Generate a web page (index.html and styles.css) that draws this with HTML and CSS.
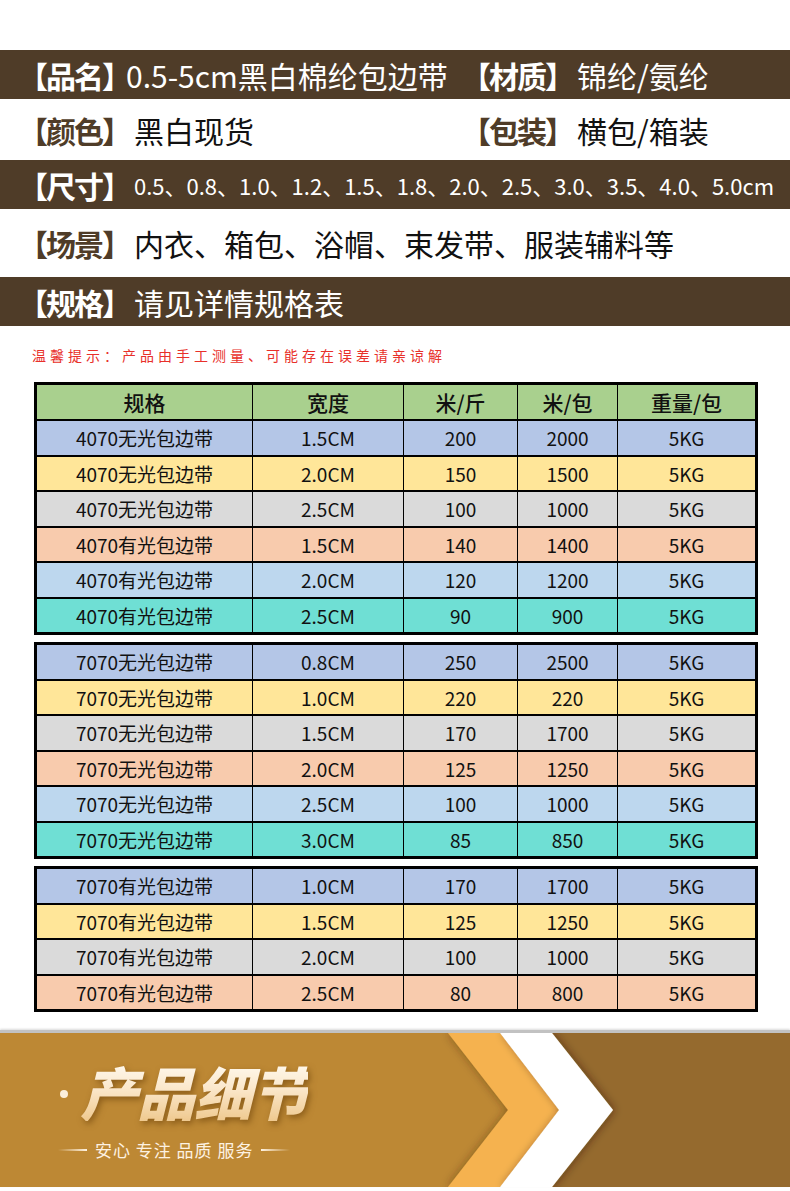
FILE: index.html
```html
<!DOCTYPE html>
<html lang="zh-CN">
<head>
<meta charset="utf-8">
<title>包边带规格</title>
<link rel="stylesheet" href="styles.css">
</head>
<body>
<div class="page">
  <div class="top-space"></div>

  <div class="bar dark">
    <div class="col1"><span class="label tight">【品名】</span>0.5-5cm黑白棉纶包边带</div>
    <div class="col2"><span class="label">【材质】</span>锦纶/氨纶</div>
  </div>
  <div class="bar light h61">
    <div class="col1"><span class="label">【颜色】</span>黑白现货</div>
    <div class="col2"><span class="label">【包装】</span>横包/箱装</div>
  </div>
  <div class="bar dark">
    <span class="label">【尺寸】</span><span class="sizes">0.5、0.8、1.0、1.2、1.5、1.8、2.0、2.5、3.0、3.5、4.0、5.0cm</span>
  </div>
  <div class="bar light h68">
    <span class="label">【场景】</span>内衣、箱包、浴帽、束发带、服装辅料等
  </div>
  <div class="bar dark">
    <span class="label">【规格】</span>请见详情规格表
  </div>

  <p class="notice">温馨提示：产品由手工测量、可能存在误差请亲谅解</p>

  <div class="tables">
    <div class="spec">
      <div class="row hd"><span>规格</span><span>宽度</span><span>米/斤</span><span>米/包</span><span>重量/包</span></div>
      <div class="row c-blue"><span>4070无光包边带</span><span>1.5CM</span><span>200</span><span>2000</span><span>5KG</span></div>
      <div class="row c-yellow"><span>4070无光包边带</span><span>2.0CM</span><span>150</span><span>1500</span><span>5KG</span></div>
      <div class="row c-gray"><span>4070无光包边带</span><span>2.5CM</span><span>100</span><span>1000</span><span>5KG</span></div>
      <div class="row c-peach"><span>4070有光包边带</span><span>1.5CM</span><span>140</span><span>1400</span><span>5KG</span></div>
      <div class="row c-sky"><span>4070有光包边带</span><span>2.0CM</span><span>120</span><span>1200</span><span>5KG</span></div>
      <div class="row c-teal"><span>4070有光包边带</span><span>2.5CM</span><span>90</span><span>900</span><span>5KG</span></div>
    </div>

    <div class="spec">
      <div class="row c-blue"><span>7070无光包边带</span><span>0.8CM</span><span>250</span><span>2500</span><span>5KG</span></div>
      <div class="row c-yellow"><span>7070无光包边带</span><span>1.0CM</span><span>220</span><span>220</span><span>5KG</span></div>
      <div class="row c-gray"><span>7070无光包边带</span><span>1.5CM</span><span>170</span><span>1700</span><span>5KG</span></div>
      <div class="row c-peach"><span>7070无光包边带</span><span>2.0CM</span><span>125</span><span>1250</span><span>5KG</span></div>
      <div class="row c-sky"><span>7070无光包边带</span><span>2.5CM</span><span>100</span><span>1000</span><span>5KG</span></div>
      <div class="row c-teal"><span>7070无光包边带</span><span>3.0CM</span><span>85</span><span>850</span><span>5KG</span></div>
    </div>

    <div class="spec">
      <div class="row c-blue"><span>7070有光包边带</span><span>1.0CM</span><span>170</span><span>1700</span><span>5KG</span></div>
      <div class="row c-yellow"><span>7070有光包边带</span><span>1.5CM</span><span>125</span><span>1250</span><span>5KG</span></div>
      <div class="row c-gray"><span>7070有光包边带</span><span>2.0CM</span><span>100</span><span>1000</span><span>5KG</span></div>
      <div class="row c-peach"><span>7070有光包边带</span><span>2.5CM</span><span>80</span><span>800</span><span>5KG</span></div>
    </div>
  </div>

  <div class="banner">
    <svg class="banner-bg" width="790" height="154" viewBox="0 0 790 154" preserveAspectRatio="none" aria-hidden="true">
      <defs>
        <filter id="sh" x="-30%" y="-10%" width="160%" height="120%">
          <feDropShadow dx="0" dy="0" stdDeviation="5" flood-color="#3a2406" flood-opacity="0.45"/>
        </filter>
        <filter id="sh2" x="-30%" y="-10%" width="160%" height="120%">
          <feDropShadow dx="2" dy="0" stdDeviation="4" flood-color="#2a1a04" flood-opacity="0.45"/>
        </filter>
      </defs>
      <rect x="0" y="0" width="790" height="154" fill="#bd8834"/>
      <polygon points="552,0 790,0 790,154 552,154 613,77" fill="#956a2e"/>
      <polygon points="448,0 500,0 559,77 500,154 448,154 508,77" fill="#f5b24f" filter="url(#sh)"/>
      <polygon points="500,0 552,0 613,77 552,154 500,154 559,77" fill="#ffffff" filter="url(#sh2)"/>
    </svg>
    <div class="banner-content">
      <div class="title"><span class="dot"></span><span class="title-text">产品细节</span></div>
      <div class="subtitle"><span class="line left"></span><span class="sub-text">安心 专注 品质 服务</span><span class="line right"></span></div>
    </div>
  </div>
</div>
</body>
</html>
```

FILE: styles.css
```css
html, body {
  margin: 0;
  padding: 0;
  background: #ffffff;
}

body {
  font-family: "Noto Sans CJK SC", "Noto Sans", sans-serif;
  color: #111;
}

.page {
  width: 790px;
  height: 1191px;
  overflow: hidden;
}

.top-space {
  height: 50px;
}

/* info bars */
.bar {
  display: flex;
  align-items: center;
  padding-left: 18px;
  font-size: 30px;
  line-height: 1;
  white-space: nowrap;
}

.bar.dark {
  height: 49px;
  background: #4f3c28;
  color: #ffffff;
}

.bar.light {
  color: #111111;
}

.bar.light .label {
  color: #4f3c28;
}

.bar.h61 { height: 61px; }
.bar.h68 { height: 68px; }

.label {
  font-weight: 700;
  letter-spacing: -2px;
  margin-right: 4px;
}

.label.tight {
  margin-right: -4px;
}

.col1 {
  width: 443px;
}

.sizes {
  font-size: 22px;
}

/* notice */
.notice {
  margin: 19px 0 0 32px;
  font-size: 14px;
  line-height: 20px;
  letter-spacing: 4px;
  color: #e8302a;
}

/* tables */
.tables {
  margin-top: 17px;
  display: flex;
  flex-direction: column;
  gap: 7px;
  padding-left: 34px;
}

.spec {
  width: 724px;
  box-sizing: border-box;
  border: 3px solid #000;
  background: #000;
  display: flex;
  flex-direction: column;
  gap: 2px;
}

.row {
  display: grid;
  grid-template-columns: 215px 150px 113px 99px 137px;
  column-gap: 1px;
  height: 33.5px;
}

.row > span {
  display: flex;
  align-items: center;
  justify-content: center;
  font-size: 19px;
  line-height: 1;
  color: #111;
}

.row.hd {
  height: 34px;
}

.row.hd > span {
  background: #a9d08e;
  font-size: 21px;
  font-weight: 500;
}

.c-blue > span { background: #b4c6e7; }
.c-yellow > span { background: #ffe699; }
.c-gray > span { background: #dadada; }
.c-peach > span { background: #f8cbad; }
.c-sky > span { background: #bdd7ee; }
.c-teal > span { background: #6fdfd4; }

/* banner */
.banner {
  position: relative;
  margin-top: 18px;
  height: 154px;
  border-top: 3px solid #c2c2c2;
  box-shadow: 0 -1px 2px rgba(0, 0, 0, 0.15);
  overflow: hidden;
}

.banner-bg {
  position: absolute;
  left: 0;
  top: 0;
  display: block;
}

.banner-content {
  position: relative;
  padding: 28px 0 0 58px;
  display: flex;
  flex-direction: column;
}

.title {
  display: flex;
  align-items: center;
  height: 60px;
}

.dot {
  width: 8px;
  height: 8px;
  border-radius: 50%;
  background: #fbeedb;
  margin: 6px 12px 0 2px;
}

.title-text {
  font-size: 58px;
  line-height: 60px;
  font-weight: 900;
  font-style: italic;
  letter-spacing: -1px;
  background: linear-gradient(180deg, #fffaf0 0%, #fbe8cc 45%, #efc98f 100%);
  -webkit-background-clip: text;
  background-clip: text;
  color: transparent;
  filter: drop-shadow(2px 3px 3px rgba(90, 50, 0, 0.5));
}

.subtitle {
  margin-top: 17px;
  display: flex;
  align-items: center;
  gap: 8px;
}

.line {
  width: 29px;
  height: 2px;
}

.line.left {
  background: linear-gradient(90deg, rgba(255, 245, 230, 0) 0%, #fff3e2 100%);
}

.line.right {
  background: linear-gradient(90deg, #fff3e2 0%, rgba(255, 245, 230, 0) 100%);
}

.sub-text {
  font-size: 17px;
  line-height: 24px;
  color: #fdf2e2;
  letter-spacing: 1px;
}
```
